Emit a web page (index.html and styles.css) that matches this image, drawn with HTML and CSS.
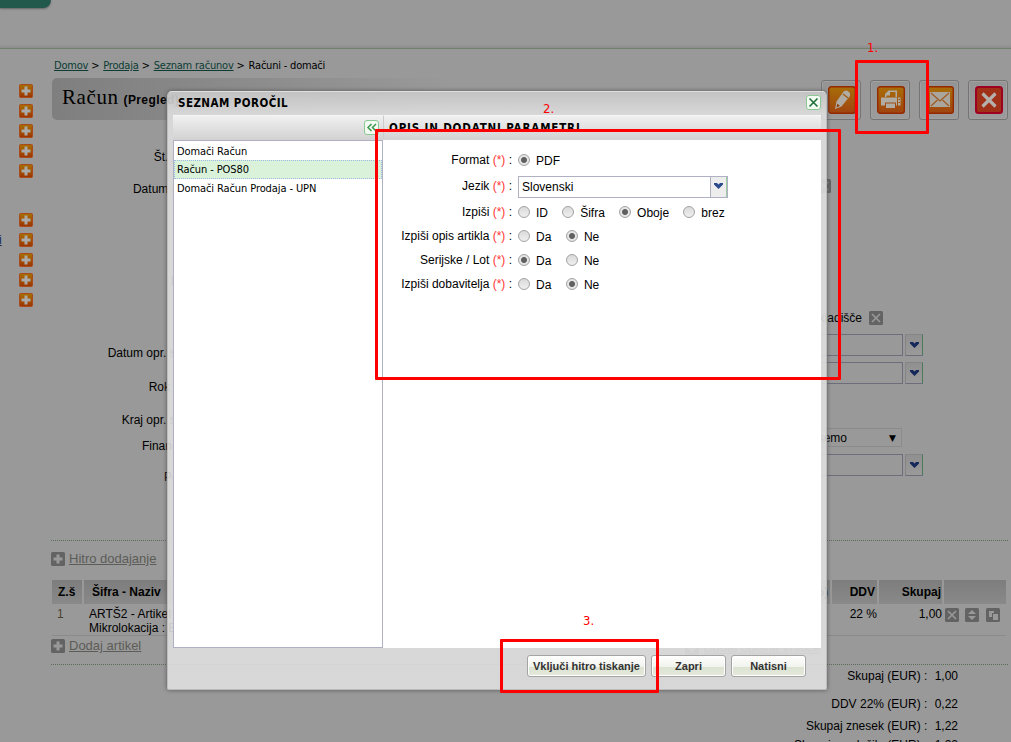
FILE: index.html
```html
<!DOCTYPE html>
<html lang="sl">
<head>
  <meta charset="UTF-8" />
  <meta name="viewport" content="width=device-width, initial-scale=1.0"/>
  <title>Računi - domači</title>
  <link rel="stylesheet" href="styles.css">
</head>
<body>
  <!-- shared icons -->
  <svg class="defs" width="0" height="0">
    <defs>
      <linearGradient id="orange" x1="0" y1="0" x2="0" y2="1">
        <stop offset="0" stop-color="#a87000"/><stop offset="1" stop-color="#9c3300"/>
      </linearGradient>
      <linearGradient id="orange2" x1="0" y1="0" x2="0" y2="1">
        <stop offset="0" stop-color="#a86e08"/><stop offset="1" stop-color="#a04410"/>
      </linearGradient>
    </defs>
    <symbol id="plus" viewBox="0 0 14 14">
      <rect x="0.5" y="0.5" width="13" height="13" rx="1" fill="url(#orange)" stroke="#a84a1c"/>
      <path d="M7 2.5v9M2.5 7h9" stroke="#aaa" stroke-width="3"/>
    </symbol>
    <symbol id="plus-gray" viewBox="0 0 14 14">
      <rect width="14" height="14" rx="1.5" fill="#636363"/>
      <path d="M7 2.5v9M2.5 7h9" stroke="#999" stroke-width="3"/>
    </symbol>
    <symbol id="x-gray" viewBox="0 0 14 14">
      <rect width="14" height="14" rx="1.5" fill="#636363"/>
      <path d="M3 3l8 8M11 3l-8 8" stroke="#999" stroke-width="1.6"/>
    </symbol>
    <symbol id="arrow" viewBox="0 0 9 6">
      <path d="M0 0h3l1.5 1.5L6 0h3v1.500L4.500 6L0 1.500z"/>
    </symbol>
  </svg>

  <div class="page">
    <header class="top"><div class="tab"></div></header>

    <div class="columns">
      <aside class="side">
        <div class="side-group">
          <svg><use href="#plus"/></svg>
          <svg><use href="#plus"/></svg>
          <svg><use href="#plus"/></svg>
          <svg><use href="#plus"/></svg>
          <svg><use href="#plus"/></svg>
        </div>
        <div class="side-group">
          <svg><use href="#plus"/></svg>
          <div class="side-item"><a href="#">i</a><svg><use href="#plus"/></svg></div>
          <svg><use href="#plus"/></svg>
          <svg><use href="#plus"/></svg>
          <svg><use href="#plus"/></svg>
        </div>
      </aside>

      <main>
        <nav class="crumbs">
          <a href="#">Domov</a><span>&gt;</span><a href="#">Prodaja</a><span>&gt;</span><a href="#">Seznam računov</a><span>&gt;</span><b>Računi - domači</b>
        </nav>

        <div class="titlebar">
          <h1>Račun <small>(Pregled)</small></h1>
          <div class="tools">
            <button class="tool"><svg viewBox="0 0 28 28"><rect x="0.700" y="0.700" width="26.600" height="26.600" rx="2.500" fill="url(#orange2)" stroke="#942800" stroke-width="1.400"/><path d="M7 23l1.500-7.500L16 5l3-.5 3 2.500v3l-8.500 10.500z" fill="#b0aca4"/><path d="M15 8l5 4" stroke="#a05a10" stroke-width="1.200"/><path d="M8.500 21.500l.8-3.700 2.600 1.900z" fill="#8c3a00"/></svg></button>
            <button class="tool"><svg viewBox="0 0 28 28"><rect x="0.700" y="0.700" width="26.600" height="26.600" rx="2.500" fill="url(#orange2)" stroke="#942800" stroke-width="1.400"/><path d="M11.500 4.500H20V11h-1.500V6H13v3.500H9.500V11H8V8z" fill="#b0aca4"/><path d="M4 11.500h16v8H4z M21 11.500h2.500v8H21z" fill="#b0aca4"/><path d="M8 16.500h11v6.500H8z" fill="#a04c10"/><path d="M9 17.500h9V22H9z" fill="#b0aca4"/><path d="M21.500 13.500h1.500M21.500 16.500h1.500" stroke="#9c5010"/></svg></button>
            <button class="tool"><svg viewBox="0 0 28 28"><rect x="0.700" y="0.700" width="26.600" height="26.600" rx="2.500" fill="url(#orange2)" stroke="#942800" stroke-width="1.400"/><path d="M4 6h20v15H4z" fill="#aaa69e"/><path d="M5 7l9 8 9-8M5 20l6.500-6M23 20l-6.500-6" stroke="#a05a20" stroke-width="1.200" fill="none"/></svg></button>
            <button class="tool"><svg viewBox="0 0 28 28"><rect x="1" y="1" width="26" height="26" rx="2.500" fill="#a03018" stroke="#a00020" stroke-width="2"/><path d="M7.500 7.500l13 13M20.500 7.500l-13 13" stroke="#b4b0ac" stroke-width="3.200"/></svg></button>
          </div>
        </div>

        <div class="form">
          <div class="labels">
            <label>Št. računa :</label>
            <label class="r2">Datum računa :</label>
            <label class="r3">Projekt :</label>
            <label class="r4">Datum opr. storitve :</label>
            <label class="r5">Rok plačila :</label>
            <label class="r6">Kraj opr. storitve :</label>
            <label class="r7">Financiranje :</label>
            <label class="r8">Poročilo :</label>
          </div>
          <div class="fields">
            <svg class="icon clear"><use href="#x-gray"/></svg>
            <div class="store">Skladišče <svg class="icon"><use href="#x-gray"/></svg></div>
            <div class="combo"><span></span><i><svg><use href="#arrow"/></svg></i></div>
            <div class="combo"><span></span><i><svg><use href="#arrow"/></svg></i></div>
            <div class="select"><span>Vnesemo</span><em>▼</em></div>
            <div class="combo"><span></span><i><svg><use href="#arrow"/></svg></i></div>
          </div>
        </div>

        <section class="lines">
          <div class="add"><svg class="icon"><use href="#plus-gray"/></svg><a href="#">Hitro dodajanje</a></div>
          <table>
            <tr>
              <th class="c1">Z.š</th><th class="c2"><div><span>Šifra - Naziv</span><span>(%)</span></div></th><th class="c3">DDV</th><th class="c4">Skupaj</th><th class="c5"></th>
            </tr>
            <tr>
              <td class="num">1</td>
              <td class="name">ARTŠ2 - Artikel 2<br>Mikrolokacija : E</td>
              <td class="right">22 %</td>
              <td class="right">1,00</td>
              <td class="acts"><div>
                <svg class="icon"><use href="#x-gray"/></svg>
                <svg class="icon" viewBox="0 0 14 14"><rect width="14" height="14" rx="1.500" fill="#636363"/><path d="M7 2l4 4H3zM7 12l4-4H3z" fill="#999"/></svg>
                <svg class="icon last" viewBox="0 0 14 14"><rect width="14" height="14" rx="1.500" fill="#636363"/><path d="M3 3h5v2H6v4H3z M7 6h5v6H7z" fill="#999"/></svg>
              </div></td>
            </tr>
          </table>
          <div class="add second"><svg class="icon"><use href="#plus-gray"/></svg><a href="#">Dodaj artikel</a>
            <div class="add-desc"><svg class="icon"><use href="#plus-gray"/></svg><a href="#">Dodaj opisne vrstice</a></div></div>
        </section>

        <div class="totals">
          <p>Skupaj (EUR) : <b>1,00</b></p>
          <p class="t2">DDV 22% (EUR) : <b>0,22</b></p>
          <p class="t3">Skupaj znesek (EUR) : <b>1,22</b></p>
          <p class="t4">Skupaj za plačilo (EUR) : <b>1,22</b></p>
        </div>
      </main>
    </div>

    <!-- report dialog -->
    <div class="dialog">
      <div class="dialog-head">
        <h2>SEZNAM POROČIL</h2>
        <button class="mini"><svg viewBox="0 0 13 13"><path d="M2.500 2.500l8 8M10.500 2.500l-8 8" stroke="#1c7038" stroke-width="1.600"/></svg></button>
      </div>
      <div class="dialog-body">
        <div class="list-panel">
          <div class="strip"><button class="mini"><svg viewBox="0 0 13 13"><path d="M6.500 3L3 6.500 6.500 10M11 3L7.500 6.500 11 10" stroke="#3c9850" stroke-width="1.500" fill="none"/></svg></button></div>
          <ul>
            <li>Domači Račun</li>
            <li class="selected">Račun - POS80</li>
            <li>Domači Račun Prodaja - UPN</li>
          </ul>
        </div>
        <div class="param-panel">
          <div class="strip"><h2>OPIS IN DODATNI PARAMETRI</h2></div>
          <div class="params">
            <div class="row"><label>Format <em>(*)</em> :</label><input type="radio" name="format" checked><span>PDF</span></div>
            <div class="row lang"><label>Jezik <em>(*)</em> :</label><div class="combobox"><span>Slovenski</span><i><svg><use href="#arrow"/></svg></i></div></div>
            <div class="row out"><label>Izpiši <em>(*)</em> :</label><input type="radio" name="out"><span>ID</span><input type="radio" name="out"><span>Šifra</span><input type="radio" name="out" checked><span>Oboje</span><input type="radio" name="out"><span>brez</span></div>
            <div class="row"><label>Izpiši opis artikla <em>(*)</em> :</label><input type="radio" name="desc"><span>Da</span><input type="radio" name="desc" checked><span>Ne</span></div>
            <div class="row"><label>Serijske / Lot <em>(*)</em> :</label><input type="radio" name="lot" checked><span>Da</span><input type="radio" name="lot"><span>Ne</span></div>
            <div class="row"><label>Izpiši dobavitelja <em>(*)</em> :</label><input type="radio" name="sup"><span>Da</span><input type="radio" name="sup" checked><span>Ne</span></div>
          </div>
        </div>
      </div>
      <div class="dialog-foot">
        <button class="btn wide">Vključi hitro tiskanje</button>
        <button class="btn">Zapri</button>
        <button class="btn">Natisni</button>
      </div>
    </div>

    <!-- step markers -->
    <div class="mark mark1"></div><div class="step step1">1.</div>
    <div class="mark mark2"></div><div class="step step2">2.</div>
    <div class="mark mark3"></div><div class="step step3">3.</div>
  </div>
</body>
</html>
```

FILE: styles.css
```css
* {
  box-sizing: border-box;
}

body {
  margin: 0;
  font: 12px/14px "Liberation Sans", Arial, sans-serif;
  color: #000;
}

h1, h2, p, ul {
  margin: 0;
  padding: 0;
}

button {
  font-family: inherit;
  margin: 0;
  padding: 0;
}

svg {
  display: block;
  flex: none;
}

.defs {
  position: absolute;
}

.page {
  position: relative;
  width: 1011px;
  height: 742px;
  overflow: hidden;
  background: #999;
}

.top {
  height: 49px;
  border-bottom: 1px solid #71806d;
  background: linear-gradient(#999 92%, #8d8d8d);
}

.tab {
  width: 51px;
  height: 8px;
  background: #23584c;
  border-radius: 0 0 9px 0;
  box-shadow: 0 1px 2px #666;
}

.columns {
  display: flex;
}

/* left menu */
.side {
  width: 52px;
  padding-top: 35px;
}

.side-group {
  display: flex;
  flex-direction: column;
  gap: 6px;
  align-items: flex-end;
  padding-right: 19px;
  margin-bottom: 35px;
}

.side svg, .icon {
  width: 14px;
  height: 14px;
}

.side-item {
  display: flex;
  justify-content: space-between;
  width: 34px;
}

.side-item a {
  color: #142850;
}

main {
  width: 956px;
}

.crumbs {
  display: flex;
  height: 29px;
  padding: 10px 0 0 2px;
  font: 11px/14px "DejaVu Sans Condensed", "DejaVu Sans", sans-serif;
  letter-spacing: -0.2px;
}

.crumbs a {
  color: #0c3c34;
}

.crumbs span {
  margin: 0 5px 0 3px;
  width: 7px;
}

.crumbs b {
  font-weight: normal;
}

.titlebar {
  display: flex;
  height: 42px;
  justify-content: space-between;
  background: linear-gradient(90deg, #7f7f7f, #999 42%);
  border-radius: 5px;
}

h1 {
  padding: 7px 0 0 10px;
  font: 21px/24px "Liberation Serif", serif;
  letter-spacing: .6px;
}

h1 small {
  margin-left: -1px;
  font: bold 12px "Liberation Sans", sans-serif;
  letter-spacing: 0.4px;
}

.tools {
  display: flex;
  gap: 9px;
  padding-top: 2px;
}

.tool {
  width: 40px;
  height: 40px;
  padding: 4px 5px;
  border: 1px solid #747474;
  border-radius: 3px;
  background: linear-gradient(#949494, #9c9c9c);
  box-shadow: inset 0 0 0 1px #a0a0a0;
}

.tool svg {
  width: 28px;
  height: 28px;
  margin-left: 1px;
}

/* form behind the dialog */
.form {
  display: flex;
  height: 420px;
  justify-content: space-between;
}

.labels {
  display: flex;
  flex-direction: column;
  width: 163px;
  padding-top: 30px;
  text-align: right;
}

.r2 { margin-top: 18px; }
.r3 { margin-top: 78px; }
.r4 { margin-top: 58px; }
.r5 { margin-top: 20px; margin-right: 1px; }
.r6 { margin-top: 19px; }
.r7 { margin-top: 12px; margin-right: 1px; }
.r8 { margin-top: 17px; margin-right: 1px; }

.fields {
  width: 240px;
  padding-top: 59px;
}

.clear {
  margin-left: 49px;
}

.store {
  display: flex;
  gap: 7px;
  width: 115px;
  height: 14px;
  justify-content: flex-end;
  margin: 118px 0 9px;
}

.combo {
  display: flex;
  gap: 2px;
  width: 155px;
  height: 22px;
  margin-bottom: 6px;
}

.combo span {
  flex: 1;
  border: 1px solid #6d6d7b;
}

.combo i, .combobox i {
  display: flex;
  width: 18px;
  justify-content: center;
  padding-top: 7px;
  background: linear-gradient(#909090, #9a9a9a);
  border: 1px solid #858585;
  border-right-color: #4e7a5c;
  border-bottom-color: #6d6d7b;
}

.combo i svg, .combobox i svg {
  width: 9px;
  height: 6px;
  fill: #14285a;
}

.select {
  display: flex;
  width: 134px;
  height: 19px;
  justify-content: space-between;
  align-items: center;
  margin: 44px 0 7px;
  padding: 0 5px 0 13px;
  border: 1px solid #8b8b8b;
}

.select em {
  font: 9px "DejaVu Sans", sans-serif;
}

.select span {
  width: 65px;
  text-align: right;
}

/* invoice lines */
.lines {
  height: 125px;
  margin-left: -1px;
  border-top: 1px dotted #5c6c5a;
  border-bottom: 1px dotted #5c6c5a;
}

.add {
  display: flex;
  gap: 4px;
  height: 39px;
  padding-top: 11px;
  font-size: 13px;
  line-height: 14px;
}

.add a {
  color: #5c5c58;
}

.second {
  height: 20px;
  padding-top: 3px;
}

.add-desc {
  display: flex;
  gap: 4px;
  margin: 2px 0 0 540px;
}

.add-desc a {
  white-space: nowrap;
}

table {
  width: 954px;
  margin-left: 1px;
  table-layout: fixed;
  border-spacing: 0;
}

th {
  height: 24px;
  padding: 0 2px 0 8px;
  background: linear-gradient(#7d7d7d, #898989);
  border-right: 2px solid #999;
  text-align: right;
}

th:last-child {
  border: 0;
}

td {
  height: 32px;
  padding: 3px 2px 0 5px;
  border-bottom: 1px solid #8b8b8b;
  vertical-align: top;
}

.c1 { width: 32px; padding-left: 6px; text-align: left; }
.c2 { width: 748px; }
.c3 { width: 47px; }
.c4 { width: 65px; padding-right: 1px; }
.c5 { width: 62px; }

.c2 div {
  display: flex;
  justify-content: space-between;
}

.num {
  color: #4c4030;
}

.right {
  text-align: right;
}

.acts {
  padding: 4px 0 0 1px;
}

.acts div {
  display: flex;
  gap: 6px;
}

.last {
  margin-left: 1px;
}

.totals {
  width: 906px;
  padding-top: 4px;
  text-align: right;
}

.totals b {
  margin-left: 4px;
  font-weight: normal;
}

.t2 { margin-top: 14px; }
.t3 { margin-top: 8px; }
.t4 { margin-top: 5px; }

/* report dialog */
.dialog {
  position: absolute;
  left: 167px;
  top: 91px;
  width: 660px;
  height: 599px;
  padding: 0 5px 0 6px;
  background: linear-gradient(rgba(200, 200, 200, .9), rgba(222, 222, 222, .9) 22px);
  border: 1px solid #bcbcbc;
  border-top-color: #e0e0e0;
  border-radius: 5px 5px 2px 2px;
  box-shadow: 0 0 4px #555;
}

.dialog-head {
  display: flex;
  height: 23px;
  justify-content: space-between;
  padding: 3px 0 0 4px;
}

h2 {
  padding-top: 1px;
  font: bold 11.500px/14px "DejaVu Sans Condensed", "DejaVu Sans", sans-serif;
  letter-spacing: 0.450px;
}

.strip h2 {
  letter-spacing: 0.850px;
}

.mini {
  width: 15px;
  height: 15px;
  background: #f2faf2;
  border: 1px solid #8cc894;
  border-radius: 3px;
}

.mini svg {
  width: 13px;
  height: 13px;
}

.dialog-body {
  display: flex;
  height: 533px;
}

.list-panel {
  display: flex;
  flex-direction: column;
  width: 210px;
  margin-left: -1px;
}

.strip {
  display: flex;
  height: 25px;
  flex: none;
  padding-top: 5px;
  justify-content: flex-end;
  background: linear-gradient(#f0f0f0, #d2d2d2);
  border-top: 1px solid #f6f6f6;
}

.list-panel .strip {
  padding-right: 4px;
}

.strip .mini {
  margin-top: -1px;
}

ul {
  flex: 1;
  padding-top: 1px;
  background: #fff;
  border: 1px solid #b0b0c4;
  list-style: none;
  font: 11px/17px "DejaVu Sans Condensed", "DejaVu Sans", sans-serif;
  letter-spacing: -0.1px;
}

li {
  height: 19px;
  padding-left: 2px;
  border: 1px solid #fff;
}

li:first-child {
  margin-top: -1px;
  padding-top: 1px;
}

.selected {
  background: #d9f2d9;
  border: 1px dotted #9cb8e4;
}

.param-panel {
  width: 438px;
  background: #fff;
}

.param-panel .strip {
  justify-content: flex-start;
  padding: 4px 0 0 5px;
  border-left: 1px solid #ccc;
}

.params {
  padding-top: 8px;
}

.row {
  display: flex;
  height: 24px;
  align-items: center;
}

.row label {
  width: 129px;
  margin-right: 6px;
  text-align: right;
}

.row em {
  color: #f33;
  font-style: normal;
}

.row input {
  appearance: none;
  width: 12px;
  height: 12px;
  margin: 0;
  border: 1px solid #a2a2a2;
  border-radius: 50%;
  background: linear-gradient(#dadada, #efefef);
}

.row input:checked {
  background: radial-gradient(#606060 0 2.500px, #e6e6e6 3.500px);
}

.row > span {
  margin: 1px 14.600px 0 6px;
}

.out > span {
  margin-right: 14.200px;
}

.lang {
  height: 28px;
}

.combobox {
  display: flex;
  width: 210px;
  height: 22px;
  margin-top: 1px;
  border: 1px solid #b0b0c4;
}

.combobox span {
  flex: 1;
  padding: 3px;
  line-height: 14px;
}

.combobox i {
  width: 17px;
  padding-top: 6px;
  background: #ededed;
  border: 0;
  border-left: 1px solid #b0b0c4;
  border-right: 1px solid #a0cca4;
}

.combobox i svg {
  fill: #2a4a8c;
}

.dialog-foot {
  display: flex;
  justify-content: flex-end;
  gap: 5px;
  padding: 7px 15px 0 0;
}

.btn {
  width: 75px;
  height: 22px;
  border: 1px solid #a4a4a4;
  border-radius: 3px;
  background: linear-gradient(#fff, #f0f3ec 56%, #dce3d2 57%, #e4e9dc);
  box-shadow: inset 0 0 0 1px #fff;
  font-size: 11px;
  font-weight: bold;
  color: #333;
}

.wide {
  width: 119px;
}

/* step markers */
.mark {
  position: absolute;
  border: 3px solid #f00;
  border-radius: 1px;
}

.mark1 { left: 855px; top: 60px; width: 74px; height: 74px; }
.mark2 { left: 375px; top: 129px; width: 466px; height: 251px; }
.mark3 { left: 500px; top: 639px; width: 159px; height: 54px; }

.step {
  position: absolute;
  color: #f00;
  font: 13px/14px "DejaVu Sans Condensed", "DejaVu Sans", sans-serif;
}

.step1 { left: 867px; top: 41px; }
.step2 { left: 543px; top: 102px; }
.step3 { left: 583px; top: 614px; }
```
